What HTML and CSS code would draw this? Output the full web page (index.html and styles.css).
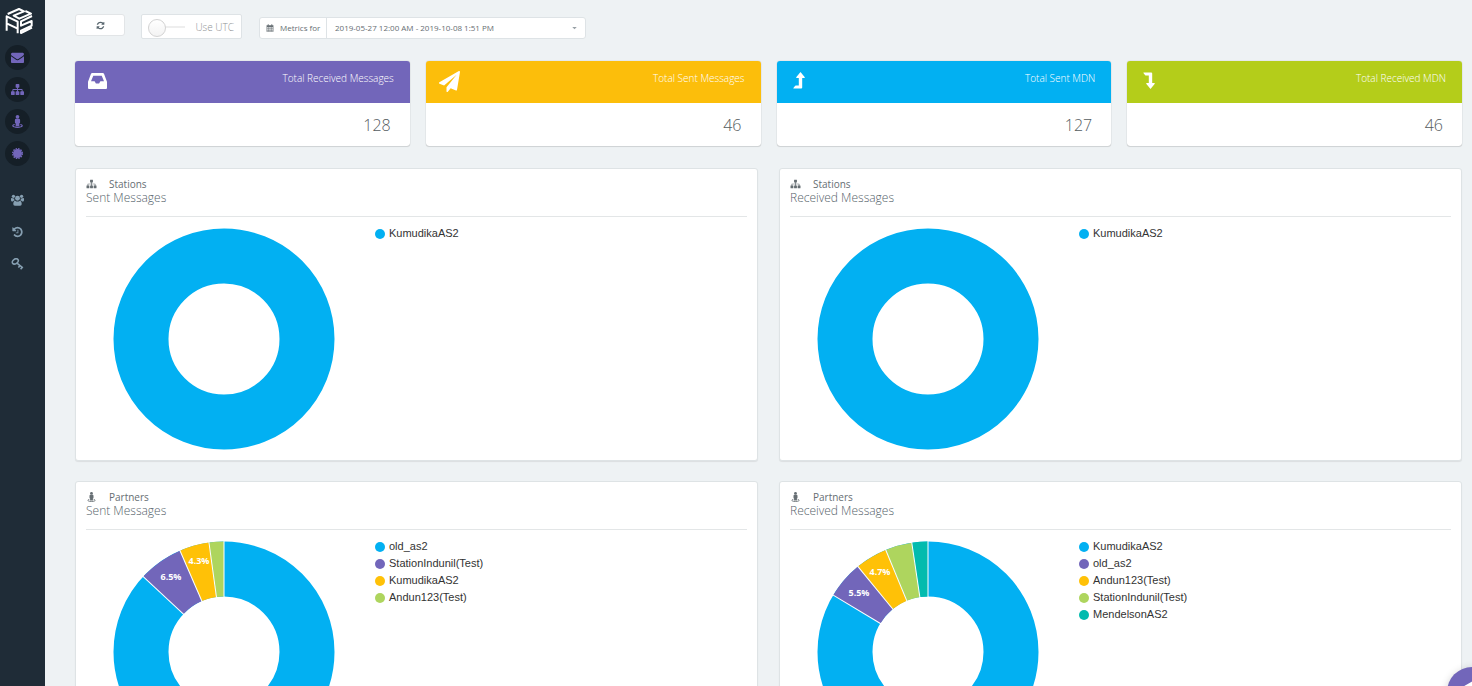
FILE: index.html
```html
<!DOCTYPE html>
<html lang="en">
<head>
<meta charset="utf-8">
<title>Dashboard</title>
<meta name="viewport" content="width=device-width, initial-scale=1">
<link rel="stylesheet" href="styles.css">
</head>
<body>
<svg class="sprite" aria-hidden="true">
  <symbol id="envelope" viewBox="0 0 1792 1792"><path d="M1792 710v794q0 66-47 113t-113 47h-1472q-66 0-113-47t-47-113v-794q44 49 101 87 362 246 497 345 57 42 92.500 65.500t94.500 48 110 24.500h2q51 0 110-24.500t94.500-48 92.500-65.500q170-123 498-345 57-39 100-87zm0-294q0 79-49 151t-122 123q-376 261-468 325-10 7-42.500 31t-54 38.500-52 32.500-57.500 27-50 9h-2q-23 0-50-9t-57.500-27-52-32.500-54-38.500-42.500-31q-91-64-262-182.500t-205-142.500q-62-42-117-115.500t-55-136.500q0-78 41.500-130t118.500-52h1472q65 0 112.500 47t47.500 113z"/></symbol>
  <symbol id="sitemap" viewBox="0 0 1792 1792"><path d="M1792 1248v320q0 40-28 68t-68 28h-320q-40 0-68-28t-28-68v-320q0-40 28-68t68-28h96v-192h-512v192h96q40 0 68 28t28 68v320q0 40-28 68t-68 28h-320q-40 0-68-28t-28-68v-320q0-40 28-68t68-28h96v-192h-512v192h96q40 0 68 28t28 68v320q0 40-28 68t-68 28h-320q-40 0-68-28t-28-68v-320q0-40 28-68t68-28h96v-192q0-52 38-90t90-38h512v-192h-96q-40 0-68-28t-28-68v-320q0-40 28-68t68-28h320q40 0 68 28t28 68v320q0 40-28 68t-68 28h-96v192h512q52 0 90 38t38 90v192h96q40 0 68 28t28 68z"/></symbol>
  <symbol id="refresh" viewBox="0 0 1792 1792"><path d="M1639 1056q0 5-1 7-64 268-268 434.500t-478 166.500q-146 0-282.500-55t-243.500-157l-129 129q-19 19-45 19t-45-19-19-45v-448q0-26 19-45t45-19h448q26 0 45 19t19 45-19 45l-137 137q71 66 161 102t187 36q134 0 250-65t186-179q11-17 53-117 8-23 30-23h192q13 0 22.500 9.500t9.500 22.500zm25-800v448q0 26-19 45t-45 19h-448q-26 0-45-19t-19-45 19-45l138-138q-148-137-349-137-134 0-250 65t-186 179q-11 17-53 117-8 23-30 23h-199q-13 0-22.500-9.500t-9.500-22.500v-7q65-268 270-434.500t480-166.500q146 0 284 55.500t245 156.500l130-129q19-19 45-19t45 19 19 45z"/></symbol>
  <symbol id="plane" viewBox="0 0 1792 1792"><path d="M1764 11q33 24 27 64l-256 1536q-5 29-32 45-14 8-31 8-11 0-24-5l-453-185-242 295q-18 23-49 23-13 0-22-4-19-7-30.500-23.500t-11.500-36.500v-349l864-1059-1069 925-395-162q-37-14-40-55-2-40 32-59l1664-960q15-9 32-9 20 0 36 11z"/></symbol>
  <symbol id="history" viewBox="0 0 1792 1792"><path d="M1664 896q0 156-61 298t-164 245-245 164-298 61q-172 0-327-72.500t-264-204.500q-7-10-6.500-22.500t8.500-20.500l137-138q10-9 25-9 16 2 23 12 73 95 179 147t225 52q104 0 198.500-40.500t163.500-109.500 109.500-163.500 40.500-198.500-40.500-198.500-109.500-163.500-163.500-109.500-198.500-40.500q-98 0-188 35.500t-160 101.500l137 138q31 30 14 69-17 40-59 40h-448q-26 0-45-19t-19-45v-448q0-42 40-59 39-17 69 14l130 129q107-101 244.500-156.500t284.500-55.500q156 0 298 61t245 164 164 245 61 298zm-640-288v448q0 14-9 23t-23 9h-320q-14 0-23-9t-9-23v-64q0-14 9-23t23-9h224v-352q0-14 9-23t23-9h64q14 0 23 9t9 23z"/></symbol>
  <symbol id="street" viewBox="0 0 14 14"><circle cx="7" cy="2" r="2"/><path d="M5.500 4h3q1.300 0 1.300 1.300V8q0 .7-.8.800V12H5V8.800q-.8-.1-.8-.8V5.300Q4.200 4 5.500 4z"/><path d="M4 10.300C.8 10.800.8 13.200 7 13.300c6.200-.1 6.200-2.500 3-3" fill="none" stroke="currentColor" stroke-width="1.200"/></symbol>
  <symbol id="seal" viewBox="-1 -1 16 16"><circle cx="7" cy="7" r="5.500"/><circle cx="7" cy="7" r="6" fill="none" stroke="currentColor" stroke-width="1.600" stroke-dasharray="1.900 1.240"/></symbol>
  <symbol id="users" viewBox="0 0 16 14"><circle cx="3" cy="2.500" r="2"/><circle cx="13" cy="2.500" r="2"/><path d="M0 7V5.500q0-1 1-.9 2 1 3 .3-.3 2 .7 2.800-1.600 0-2.500 1H1Q0 8.500 0 7zM16 7V5.500q0-1-1-.9-2 1-3 .3.300 2-.7 2.800 1.600 0 2.500 1H15q1-.2 1-1.700z"/><circle cx="8" cy="4.800" r="3"/><path d="M5.200 7.800Q8 10 10.800 7.800q2.400.3 2.400 4.200 0 2-2 2H4.800q-2 0-2-2 0-3.900 2.400-4.200z"/></symbol>
  <symbol id="key" viewBox="0 0 14 14"><g fill="none" stroke="currentColor" stroke-width="1.800"><ellipse cx="4.400" cy="4" rx="3.800" ry="2.700" transform="rotate(-35 4.400 4)"/><path d="M6 5.800l7.300 5.700M8 11.200l2.300-2.600M10.600 13.200l2-2.500"/></g></symbol>
  <symbol id="calendar" viewBox="0 0 14 14"><path fill-rule="evenodd" d="M1 2h2V1q0-.8.800-.8t.8.800v1h4.800V1q0-.8.800-.8t.8.800v1h2v11.500H1zM2 5.500v2h2.500v-2zm3.500 0v2h3v-2zm4 0v2H12v-2zM2 8.500v1.700h2.500V8.500zm3.500 0v1.700h3V8.500zm4 0v1.700H12V8.500zM2 11.200v1.500h2.500v-1.500zm3.500 0v1.500h3v-1.500zm4 0v1.500H12v-1.500z"/></symbol>
  <symbol id="inbox" viewBox="0 0 19 16"><path fill-rule="evenodd" d="M4.200 0h10.600q.9 0 1.300.9L18.700 8q.3.600.3 1.300V15q0 1-1 1H1q-1 0-1-1V9.300Q0 8.600.3 8L2.900.9Q3.300 0 4.200 0zM5.300 2.700L3 8.200h3.600l1.300 2.400h3.200l1.300-2.400H16l-2.300-5.500z"/></symbol>
  <symbol id="level-up" viewBox="0 0 12 17"><path d="M7.500 0l4.300 5.200q.4.800-.6.800H9.200v9.500q0 1-1 1H.8q-.6 0-.4-.5l1.800-2.200q.3-.4.800-.4h2.800V6H3.800q-1 0-.6-.8z"/></symbol>
  <symbol id="level-down" viewBox="0 0 12 17"><path d="M7.500 17l4.300-5.200q.4-.8-.6-.8H9.200V1.500q0-1-1-1H.8q-.6 0-.4.500l1.800 2.200q.3.400.8.400h2.800V11H3.800q-1 0-.6.800z"/></symbol>
</svg>

<div class="app">
  <nav class="sidebar" aria-label="Main">
    <a class="logo" href="#" aria-label="Home">
      <svg viewBox="0 0 82 78"><g fill="none" stroke="#fff" stroke-width="6" stroke-linejoin="round"><path d="M4 68V25L37 41V76M4 46l33 16"/><path d="M7 18L41 3l15 7-31 13 17 9 35-15-17-8"/><path d="M80 24L47 40v13l32-14v14L47 68v7l33-16"/></g></svg>
    </a>
    <a class="round" href="#" aria-label="Messages"><svg><use href="#envelope"/></svg></a>
    <a class="round" href="#" aria-label="Stations"><svg><use href="#sitemap"/></svg></a>
    <a class="round" href="#" aria-label="Partners"><svg><use href="#street"/></svg></a>
    <a class="round" href="#" aria-label="Certificates"><svg><use href="#seal"/></svg></a>
    <div class="tools">
      <a class="plain" href="#" aria-label="Users"><svg><use href="#users"/></svg></a>
      <a class="plain" href="#" aria-label="History"><svg><use href="#history"/></svg></a>
      <a class="plain" href="#" aria-label="Keys"><svg><use href="#key"/></svg></a>
    </div>
  </nav>

  <main class="content">
    <div class="toolbar">
      <button class="refresh" type="button" aria-label="Refresh"><svg><use href="#refresh"/></svg></button>
      <label class="utc"><input type="checkbox" role="switch"><span>Use UTC</span></label>
      <div class="range">
        <label for="range"><svg><use href="#calendar"/></svg>Metrics for</label>
        <div class="picker">
          <select id="range"><option>2019-05-27 12:00 AM - 2019-10-08 1:51 PM</option></select>
          <svg class="caret" viewBox="0 0 6 4"><path d="M0 0h6L3 3z"/></svg>
        </div>
      </div>
    </div>

    <section class="stats">
      <article class="stat purple"><header><svg class="i-inbox"><use href="#inbox"/></svg><h2>Total Received Messages</h2></header><p>128</p></article>
      <article class="stat amber"><header><svg class="i-plane"><use href="#plane"/></svg><h2>Total Sent Messages</h2></header><p>46</p></article>
      <article class="stat blue"><header><svg class="i-level"><use href="#level-up"/></svg><h2>Total Sent MDN</h2></header><p>127</p></article>
      <article class="stat lime"><header><svg class="i-level"><use href="#level-down"/></svg><h2>Total Received MDN</h2></header><p>46</p></article>
    </section>

    <section class="panels">
      <article class="panel">
        <header><svg><use href="#sitemap"/></svg><span>Stations</span><h3>Sent Messages</h3></header>
        <div class="chart">
          <svg class="donut" viewBox="-111 -111 222 222"><circle class="c-blue" r="83"/></svg>
          <ul><li class="c-blue">KumudikaAS2</li></ul>
        </div>
      </article>
      <article class="panel">
        <header><svg><use href="#sitemap"/></svg><span>Stations</span><h3>Received Messages</h3></header>
        <div class="chart">
          <svg class="donut" viewBox="-111 -111 222 222"><circle class="c-blue" r="83"/></svg>
          <ul><li class="c-blue">KumudikaAS2</li></ul>
        </div>
      </article>
      <article class="panel">
        <header><svg><use href="#street"/></svg><span>Partners</span><h3>Sent Messages</h3></header>
        <div class="chart">
          <svg class="donut" viewBox="-111 -111 222 222">
            <circle class="c-blue" r="83"/>
            <path class="slice c-purple" d="M-60.660-56.650A83 83 0 0 1-33.070-76.130"/>
            <path class="slice c-amber" d="M-33.070-76.130A83 83 0 0 1-11.310-82.230"/>
            <path class="slice c-green" d="M-11.310-82.230A83 83 0 0 1 0-83"/>
            <g class="cuts"><path d="M0-54V-112"/><path d="M0-54V-112" transform="rotate(313.04)"/><path d="M0-54V-112" transform="rotate(336.52)"/><path d="M0-54V-112" transform="rotate(352.17)"/></g>
            <text x="-53" y="-72">6.5%</text><text x="-25" y="-88">4.3%</text>
          </svg>
          <ul><li class="c-blue">old_as2</li><li class="c-purple">StationIndunil(Test)</li><li class="c-amber">KumudikaAS2</li><li class="c-green">Andun123(Test)</li></ul>
        </div>
      </article>
      <article class="panel">
        <header><svg><use href="#street"/></svg><span>Partners</span><h3>Received Messages</h3></header>
        <div class="chart">
          <svg class="donut" viewBox="-111 -111 222 222">
            <circle class="c-blue" r="83"/>
            <path class="slice c-purple" d="M-71.190-42.670A83 83 0 0 1-52.650-64.170"/>
            <path class="slice c-amber" d="M-52.650-64.170A83 83 0 0 1-31.760-76.680"/>
            <path class="slice c-green" d="M-31.760-76.680A83 83 0 0 1-12.180-82.100"/>
            <path class="slice c-teal" d="M-12.180-82.100A83 83 0 0 1 0-83"/>
            <g class="cuts"><path d="M0-54V-112"/><path d="M0-54V-112" transform="rotate(300.94)"/><path d="M0-54V-112" transform="rotate(320.63)"/><path d="M0-54V-112" transform="rotate(337.5)"/><path d="M0-54V-112" transform="rotate(351.56)"/></g>
            <text x="-69" y="-56">5.5%</text><text x="-48" y="-77">4.7%</text>
          </svg>
          <ul><li class="c-blue">KumudikaAS2</li><li class="c-purple">old_as2</li><li class="c-amber">Andun123(Test)</li><li class="c-green">StationIndunil(Test)</li><li class="c-teal">MendelsonAS2</li></ul>
        </div>
      </article>
    </section>
  </main>
</div>
<button class="fab" type="button" aria-label="Send message"><svg><use href="#plane"/></svg></button>
</body>
</html>
```

FILE: styles.css
```css
* { box-sizing: border-box; }
body { margin: 0; background: #eef2f4; color: #666e73; font-family: "Open Sans", "Noto Sans", sans-serif; font-size: 10px; line-height: 14px; }
h2, h3, p, ul { margin: 0; padding: 0; }
svg { display: block; fill: currentColor; flex: none; }
.sprite { position: absolute; width: 0; height: 0; }

.app { display: flex; height: 100vh; }
.sidebar { flex: none; width: 45px; padding: 8px 5px; background: #1f2c37; display: flex; flex-direction: column; gap: 7px; }
.logo { margin-bottom: 4px; }
.logo svg { width: 28px; height: 26px; }
.round { width: 25px; height: 25px; border-radius: 50%; background: #151f27; color: #7266ba; display: grid; place-items: center; }
.round svg { width: 13px; height: 13px; }
.tools { margin-top: 14px; display: flex; flex-direction: column; gap: 7px; color: #869fb1; }
.plain { width: 25px; height: 25px; display: grid; place-items: center; color: inherit; }
.plain svg { width: 13px; height: 12px; }

.content { flex: 1; min-width: 0; overflow-y: auto; scrollbar-width: none; padding: 14px 10px 20px 30px; }
.toolbar { display: flex; align-items: flex-end; height: 25px; margin-bottom: 22px; }
.refresh { align-self: flex-start; width: 50px; height: 22px; padding: 0; border: 1px solid #e2e5e7; border-radius: 3px; background: #fff; color: #58666e; display: grid; place-items: center; }
.refresh svg { width: 9px; height: 9px; }
.utc { width: 101px; height: 25px; margin: 0 17px 0 16px; padding: 0 7px 0 6px; display: flex; align-items: center; justify-content: space-between; border: 1px solid #dee3e6; border-radius: 2px; background: #fff; color: #8f9294; font-weight: 300; }
.utc input { appearance: none; position: relative; width: 37px; height: 16px; margin: 0; background: linear-gradient(#eee, #eee) center / 100% 2px no-repeat; }
.utc input::before { content: ""; position: absolute; left: 0; top: 0; width: 16px; height: 16px; border: 1px solid #d3d3d3; border-radius: 50%; background: linear-gradient(#fff, #f3f3f3); }
.utc input:checked::before { left: 21px; }
.range { display: flex; width: 327px; height: 22px; border: 1px solid #dee3e6; border-radius: 3px; background: #fff; font-size: 8px; }
.range label { display: flex; align-items: center; gap: 6px; width: 67px; padding-left: 6px; border-right: 1px solid #dee3e6; white-space: nowrap; }
.range label svg { width: 8px; height: 8px; }
.picker { flex: 1; display: grid; align-items: center; }
.picker > * { grid-area: 1 / 1; }
.picker select { appearance: none; width: 100%; height: 20px; padding: 0 8px; border: 0; background: none; color: inherit; font: inherit; }
.caret { width: 5px; height: 3px; margin-right: 8px; justify-self: end; pointer-events: none; color: #98a1a6; }

.stats { display: grid; grid-template-columns: repeat(4, 1fr); gap: 16px; margin-bottom: 22px; }
.stat { overflow: hidden; border-radius: 3px; background: #fff; box-shadow: 0 0 1px rgba(0, 0, 0, .35), 0 1px 1px rgba(0, 0, 0, .1); }
.stat header { display: flex; justify-content: space-between; height: 42px; padding: 10px 16px 0 13px; color: #fff; }
.stat h2 { font-size: 10px; font-weight: 300; line-height: 15px; }
.stat p { padding: 10px 19px 9px; color: #555c60; font-size: 16px; font-weight: 300; line-height: 24px; text-align: right; }
.purple header { background: #7266ba; }
.amber header { background: #fcbe0b; }
.blue header { background: #02b0f2; }
.lime header { background: #b4cd1a; }
.i-inbox { width: 19px; height: 16px; margin-top: 2px; }
.i-plane { width: 21px; height: 21px; }
.i-level { width: 12px; height: 17px; margin: 1px 3px; }

.panels { display: grid; grid-template-columns: repeat(2, 1fr); gap: 20px 21px; }
.panel { padding: 8px 10px 10px; border: 1px solid #dee3e5; border-radius: 3px; background: #fff; box-shadow: 0 1px 1px rgba(0, 0, 0, .08); }
.panel header { display: grid; grid-template-columns: 12px 1fr; column-gap: 11px; align-items: center; padding-bottom: 11px; border-bottom: 1px solid #e3e6e7; }
.panel header svg { width: 11px; height: 10px; }
.panel h3 { grid-column: 1 / -1; color: #56636b; font-size: 12px; font-weight: 300; line-height: 14px; }
.chart { display: flex; align-items: flex-start; gap: 40px; padding: 11px 0 0 27px; }
.donut { width: 222px; height: 222px; }
.donut circle, .slice { fill: none; stroke: currentColor; stroke-width: 55; }
.cuts { stroke: #fff; stroke-width: 1; }
.donut text { fill: #fff; font-size: 9px; font-weight: 700; text-anchor: middle; }
.chart ul { list-style: none; font-family: "Liberation Sans", Arial, sans-serif; font-size: 11px; line-height: 11px; display: grid; gap: 6px; }
.chart li { display: flex; align-items: center; gap: 4px; -webkit-text-fill-color: #333; }
.chart li::before { content: ""; width: 10px; height: 10px; border-radius: 50%; background: currentColor; }
.c-blue { color: #02b0f2; }
.c-purple { color: #7266ba; }
.c-amber { color: #ffc107; }
.c-green { color: #aed55e; }
.c-teal { color: #02bbae; }

.fab { position: fixed; right: -25px; bottom: -31px; width: 50px; height: 50px; padding: 0; border: 0; border-radius: 50%; background: #7266ba; color: #fff; display: grid; place-items: center; box-shadow: 0 2px 8px rgba(0, 0, 0, .2); }
.fab svg { width: 44px; height: 44px; }
```
